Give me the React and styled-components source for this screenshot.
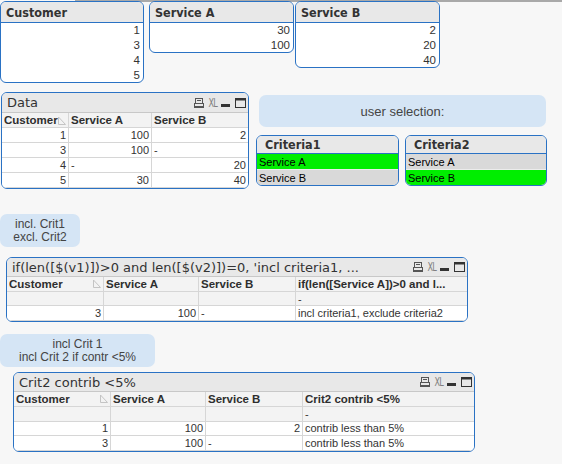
import React from "react";
import styled, { createGlobalStyle } from "styled-components";

const Global = createGlobalStyle`
  html, body {
    margin: 0;
    padding: 0;
    background: #f7f7f7;
  }
`;

const BLUE = "#2a72c4";
const CAPTION_FONT = `"DejaVu Sans Condensed", "DejaVu Sans", sans-serif`;
const TITLE_FONT = `"DejaVu Sans", sans-serif`;
const CELL_FONT = `"Liberation Sans", Arial, sans-serif`;

const Sheet = styled.div`
  position: relative;
  width: 562px;
  height: 464px;
  overflow: hidden;
  background: #f7f7f7;
`;

const TabEdge = styled.div`
  position: absolute;
  left: 75px;
  right: 0;
  top: 0;
  height: 2px;
  background: #a9a9a9;
`;

// sheet objects sit freely on the QlikView canvas
const Placed = styled.div`
  position: absolute;
  left: ${(p) => p.$x}px;
  top: ${(p) => p.$y}px;
  width: ${(p) => p.$w}px;
  height: ${(p) => p.$h}px;
`;

const Frame = styled.div`
  box-sizing: border-box;
  width: 100%;
  height: 100%;
  border: 1px solid ${BLUE};
  border-radius: 6px;
  background: #ffffff;
  overflow: hidden;
  display: flex;
  flex-direction: column;
`;

const Caption = styled.div`
  box-sizing: border-box;
  flex: 0 0 ${(p) => p.$h || 19}px;
  display: flex;
  align-items: center;
  padding: 0 2px 0 ${(p) => p.$pad || 5}px;
  background: #e8e8e8;
  border-bottom: 1px solid ${(p) => (p.$blue ? BLUE : "#c8c8c8")};
  font-family: ${(p) => (p.$bold ? CAPTION_FONT : TITLE_FONT)};
  font-size: ${(p) => (p.$bold ? 12.5 : 13)}px;
  font-weight: ${(p) => (p.$bold ? 700 : 400)};
  color: #333;
  white-space: nowrap;
`;

const CaptionText = styled.span`
  flex: 1;
  overflow: hidden;
`;

const Icons = styled.div`
  display: flex;
  align-items: center;
  gap: 5px;
  color: #555;
`;

const XL = styled.span`
  display: inline-block;
  font-family: ${CAPTION_FONT};
  font-size: 12px;
  color: #808080;
  letter-spacing: -1px;
  transform: scaleX(0.75);
  margin: 0 -2px;
`;

const ValueRow = styled.div`
  height: 15px;
  line-height: 15px;
  text-align: right;
  padding-right: 3px;
  font-family: ${CELL_FONT};
  font-size: 11.5px;
  color: #333;
`;

const SelRow = styled.div`
  box-sizing: border-box;
  height: 16px;
  line-height: 16px;
  padding-left: 2px;
  background: ${(p) => (p.$on ? "#00ee00" : "#d9d9d9")};
  font-family: ${CELL_FONT};
  font-size: 11px;
  color: #000;
  border-bottom: ${(p) => (p.$last ? "none" : "1px solid #ececec")};
`;

const Row = styled.div`
  display: grid;
  grid-template-columns: ${(p) => p.$cols};
  height: 15px;
  background: ${(p) => (p.$shade ? "#f3f3f3" : "#ffffff")};
`;

const Cell = styled.div`
  box-sizing: border-box;
  display: flex;
  align-items: center;
  justify-content: ${(p) => (p.$num ? "flex-end" : "flex-start")};
  padding: 0 2px;
  border-right: 1px solid #d6d6d6;
  border-bottom: 1px solid #d6d6d6;
  font-family: ${CELL_FONT};
  font-size: 11px;
  font-weight: ${(p) => (p.$head ? 700 : 400)};
  color: ${(p) => (p.$head ? "#2e2e2e" : "#333")};
  white-space: nowrap;
  overflow: hidden;

  &:last-child {
    border-right: none;
  }
`;

const HeadLabel = styled.span`
  flex: 1;
  overflow: hidden;
  font-size: 11.5px;
`;

const Note = styled.div`
  box-sizing: border-box;
  width: 100%;
  height: 100%;
  border-radius: 7px;
  background: #d5e5f5;
  display: flex;
  flex-direction: column;
  align-items: center;
  justify-content: center;
  font-family: ${CELL_FONT};
  font-size: ${(p) => p.$size || 12}px;
  line-height: 13px;
  color: #444;
`;

const PrintIcon = () => (
  <svg width="10" height="10" viewBox="0 0 10 10">
    <rect x="1.5" y="0.5" width="7" height="5" fill="none" stroke="#555" />
    <line x1="3" y1="2.5" x2="7" y2="2.5" stroke="#555" />
    <rect x="0.5" y="5.5" width="9" height="3" fill="none" stroke="#555" />
    <line x1="0" y1="9.5" x2="10" y2="9.5" stroke="#555" />
  </svg>
);

const MinIcon = () => (
  <svg width="9" height="10" viewBox="0 0 9 10">
    <rect x="0" y="6" width="9" height="3" fill="#333" />
  </svg>
);

const MaxIcon = () => (
  <svg width="11" height="10" viewBox="0 0 11 10">
    <rect x="0.5" y="0.5" width="10" height="9" fill="none" stroke="#333" />
    <rect x="0.5" y="0.5" width="10" height="2" fill="#333" />
  </svg>
);

const SortMark = () => (
  <svg width="8" height="9" viewBox="0 0 8 9">
    <path d="M0.5 1 L0.5 8.5 L7.5 8.5 Z" fill="none" stroke="#c4c4c4" />
  </svg>
);

const ListBox = ({ title, values }) => (
  <Frame>
    <Caption $bold $blue $h={21}>
      <CaptionText>{title}</CaptionText>
    </Caption>
    {values.map((v) => (
      <ValueRow key={v}>{v}</ValueRow>
    ))}
  </Frame>
);

const SelectBox = ({ title, selected }) => (
  <Frame>
    <Caption $bold $blue $h={18} $pad={8}>
      <CaptionText>{title}</CaptionText>
    </Caption>
    {["Service A", "Service B"].map((v, i) => (
      <SelRow key={v} $on={v === selected} $last={i === 1}>
        {v}
      </SelRow>
    ))}
  </Frame>
);

const isNum = (v) => /^\d+$/.test(v);

const TableBox = ({ title, cols, headers, rows, totals, capH }) => (
  <Frame>
    <Caption $h={capH}>
      <CaptionText>{title}</CaptionText>
      <Icons>
        <PrintIcon />
        <XL>XL</XL>
        <MinIcon />
        <MaxIcon />
      </Icons>
    </Caption>
    <Row $cols={cols} $shade>
      {headers.map((h, i) => (
        <Cell key={h} $head>
          <HeadLabel>{h}</HeadLabel>
          {i === 0 && <SortMark />}
        </Cell>
      ))}
    </Row>
    {totals && (
      <Row $cols={cols} $shade>
        {totals.map((t, i) => (
          <Cell key={i}>{t}</Cell>
        ))}
      </Row>
    )}
    {rows.map((r, ri) => (
      <Row key={ri} $cols={cols}>
        {r.map((v, i) => (
          <Cell key={i} $num={isNum(v)}>
            {v}
          </Cell>
        ))}
      </Row>
    ))}
  </Frame>
);

const WIDE = "97px 95px 97px 1fr";

export default function App() {
  return (
    <>
      <Global />
      <Sheet>
        <TabEdge />

        <Placed $x={0} $y={1} $w={144} $h={82}>
          <ListBox title="Customer" values={["1", "3", "4", "5"]} />
        </Placed>
        <Placed $x={149} $y={1} $w={145} $h={52}>
          <ListBox title="Service A" values={["30", "100"]} />
        </Placed>
        <Placed $x={295} $y={1} $w={145} $h={67}>
          <ListBox title="Service B" values={["2", "20", "40"]} />
        </Placed>

        <Placed $x={1} $y={92} $w={248} $h={97}>
          <TableBox
            title="Data"
            capH={20}
            cols="67px 83px 1fr"
            headers={["Customer", "Service A", "Service B"]}
            rows={[
              ["1", "100", "2"],
              ["3", "100", "-"],
              ["4", "-", "20"],
              ["5", "30", "40"],
            ]}
          />
        </Placed>

        <Placed $x={259} $y={95} $w={287} $h={32}>
          <Note $size={13}>user selection:</Note>
        </Placed>
        <Placed $x={256} $y={135} $w={143} $h={51}>
          <SelectBox title="Criteria1" selected="Service A" />
        </Placed>
        <Placed $x={405} $y={135} $w={142} $h={51}>
          <SelectBox title="Criteria2" selected="Service B" />
        </Placed>

        <Placed $x={0} $y={214} $w={80} $h={33}>
          <Note>
            <span>incl. Crit1</span>
            <span>excl. Crit2</span>
          </Note>
        </Placed>

        <Placed $x={6} $y={257} $w={462} $h={65}>
          <TableBox
            title="if(len([$(v1)])>0 and len([$(v2)])=0, 'incl criteria1, ..."
            capH={19}
            cols={WIDE}
            headers={["Customer", "Service A", "Service B", "if(len([Service A])>0 and l..."]}
            totals={["", "", "", "-"]}
            rows={[["3", "100", "-", "incl criteria1, exclude criteria2"]]}
          />
        </Placed>

        <Placed $x={0} $y={334} $w={155} $h={33}>
          <Note>
            <span>incl Crit 1</span>
            <span>incl Crit 2 if contr &lt;5%</span>
          </Note>
        </Placed>

        <Placed $x={13} $y={372} $w={462} $h={80}>
          <TableBox
            title="Crit2 contrib <5%"
            capH={19}
            cols={WIDE}
            headers={["Customer", "Service A", "Service B", "Crit2 contrib <5%"]}
            totals={["", "", "", "-"]}
            rows={[
              ["1", "100", "2", "contrib less than 5%"],
              ["3", "100", "-", "contrib less than 5%"],
            ]}
          />
        </Placed>
      </Sheet>
    </>
  );
}
